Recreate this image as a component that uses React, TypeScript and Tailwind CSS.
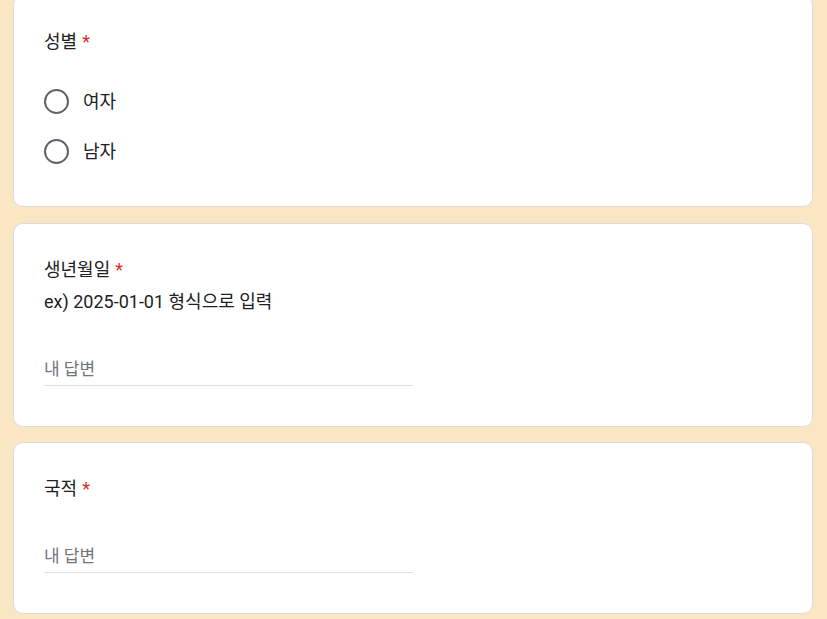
const font = { fontFamily: 'Roboto, "Noto Sans CJK KR", sans-serif' }

function Title({ children }: { children: string }) {
  return (
    <div className="text-[18px] leading-[26px] text-[#202124]">
      {children}
      <span className="ml-[5px] text-[#d93025]">*</span>
    </div>
  )
}

function Answer() {
  return (
    <div className="w-[369px] border-b border-[#e0e0e0] pb-[4px] text-[17px] leading-[24px] text-[#70757a]">
      내 답변
    </div>
  )
}

function Radio({ label }: { label: string }) {
  return (
    <div className="flex h-[50px] items-center gap-[14px]">
      <div className="h-[25px] w-[25px] rounded-full border-2 border-[#5f6368]" />
      <span className="text-[18px] text-[#202124]">{label}</span>
    </div>
  )
}

export default function App() {
  return (
    <div className="min-h-screen bg-[#fbe6c4] overflow-hidden" style={font}>
      <div className="ml-[13px] flex w-[800px] flex-col -mt-[5px]">
        <div className="rounded-[10px] border border-[#dadce0] bg-white px-[30px] pt-[33px] pb-[30px]">
          <Title>성별</Title>
          <div className="mt-[21px] flex flex-col">
            <Radio label="여자" />
            <Radio label="남자" />
          </div>
        </div>

        <div className="mt-[16px] rounded-[10px] border border-[#dadce0] bg-white px-[30px] pt-[33px] pb-[40px]">
          <Title>생년월일</Title>
          <div className="mt-[6px] text-[18px] leading-[26px] text-[#202124]">ex) 2025-01-01 형식으로 입력</div>
          <div className="mt-[42px]">
            <Answer />
          </div>
        </div>

        <div className="mt-[15px] rounded-[10px] border border-[#dadce0] bg-white px-[30px] pt-[33px] pb-[40px]">
          <Title>국적</Title>
          <div className="mt-[42px]">
            <Answer />
          </div>
        </div>
      </div>
    </div>
  )
}
